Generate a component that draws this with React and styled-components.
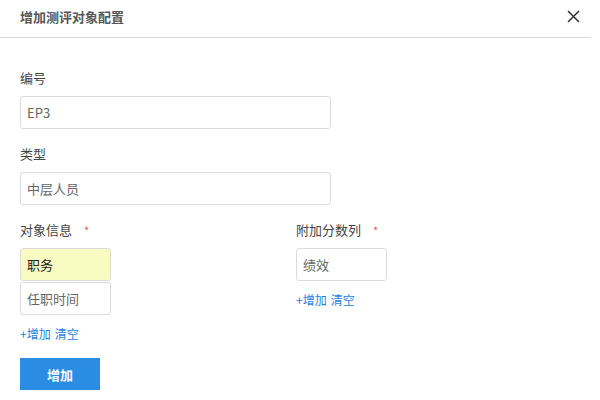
import React from "react";
import styled, { createGlobalStyle } from "styled-components";

const GlobalStyle = createGlobalStyle`
  html, body {
    margin: 0;
    padding: 0;
    background: #fff;
  }
  body {
    font-family: "Noto Sans CJK SC", "Noto Sans", "Liberation Sans", sans-serif;
  }
`;

const Modal = styled.div`
  width: 591px;
  height: 400px;
  background: #fff;
`;

const Header = styled.div`
  height: 38px;
  box-sizing: border-box;
  border-bottom: 1px solid #d6d6d6;
  display: flex;
  align-items: center;
  justify-content: space-between;
  padding: 0 10px 4px 20px;
`;

const Title = styled.div`
  font-size: 13px;
  font-weight: bold;
  color: #555;
`;

const Close = styled.button`
  border: none;
  background: none;
  padding: 0;
  width: 16px;
  height: 16px;
  display: flex;
  align-items: center;
  justify-content: center;
  cursor: pointer;
`;

const Body = styled.div`
  padding: 30px 20px 0;
`;

const Field = styled.div`
  margin-bottom: ${p => p.gap || 0}px;
`;

const Label = styled.div`
  font-size: 13px;
  color: #444;
  height: 20px;
  line-height: 20px;
  margin-bottom: 8px;
  display: flex;
  align-items: center;
`;

const Star = styled.span`
  color: #f05050;
  font-size: 11px;
  margin-left: 12px;
`;

const Input = styled.div`
  box-sizing: border-box;
  width: ${p => p.w}px;
  height: 33px;
  border: 1px solid #dcdcdc;
  border-radius: 3px;
  background: ${p => (p.active ? "#fafbc0" : "#fff")};
  color: ${p => (p.active ? "#222" : "#666")};
  font-size: 13px;
  padding: 0 6px;
  display: flex;
  align-items: center;
`;

const Stack = styled.div`
  display: flex;
  flex-direction: column;
  gap: 1px;
`;

const Columns = styled.div`
  display: flex;
`;

const Column = styled.div`
  width: ${p => p.w}px;
`;

const Links = styled.div`
  font-size: 12px;
  color: #1e7fe0;
  margin-top: 10px;
  height: 18px;
  line-height: 18px;
  display: flex;
  gap: 4px;
`;

const Submit = styled.button`
  margin-top: 15px;
  width: 80px;
  height: 32px;
  border: none;
  background: #2a8de3;
  color: #fff;
  font-family: inherit;
  font-size: 13px;
  font-weight: bold;
`;

export default function App() {
  return (
    <>
      <GlobalStyle />
      <Modal>
        <Header>
          <Title>增加测评对象配置</Title>
          <Close>
            <svg width="13" height="13" viewBox="0 0 13 13">
              <path d="M1 1L12 12M12 1L1 12" stroke="#333" strokeWidth="1.5" />
            </svg>
          </Close>
        </Header>
        <Body>
          <Field gap={15}>
            <Label>编号</Label>
            <Input w={311}>EP3</Input>
          </Field>
          <Field gap={15}>
            <Label>类型</Label>
            <Input w={311}>中层人员</Input>
          </Field>
          <Columns>
            <Column w={276}>
              <Label>
                对象信息<Star>*</Star>
              </Label>
              <Stack>
                <Input w={91} active>
                  职务
                </Input>
                <Input w={91}>任职时间</Input>
              </Stack>
              <Links>
                <span>+增加</span>
                <span>清空</span>
              </Links>
            </Column>
            <Column w={120}>
              <Label>
                附加分数列<Star>*</Star>
              </Label>
              <Input w={91}>绩效</Input>
              <Links>
                <span>+增加</span>
                <span>清空</span>
              </Links>
            </Column>
          </Columns>
          <Submit>增加</Submit>
        </Body>
      </Modal>
    </>
  );
}
